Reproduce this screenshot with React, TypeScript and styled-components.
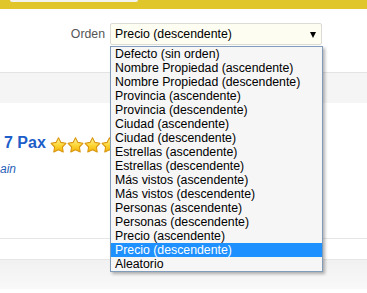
import styled, { createGlobalStyle } from 'styled-components';

const GlobalStyle = createGlobalStyle`
	body {
		margin: 0;
		background: #fff;
		font-family: "Liberation Sans", Arial, sans-serif;
	}
`;

const options = [
	'Defecto (sin orden)',
	'Nombre Propiedad (ascendente)',
	'Nombre Propiedad (descendente)',
	'Provincia (ascendente)',
	'Provincia (descendente)',
	'Ciudad (ascendente)',
	'Ciudad (descendente)',
	'Estrellas (ascendente)',
	'Estrellas (descendente)',
	'Más vistos (ascendente)',
	'Más vistos (descendente)',
	'Personas (ascendente)',
	'Personas (descendente)',
	'Precio (ascendente)',
	'Precio (descendente)',
	'Aleatorio',
];

const SELECTED = 'Precio (descendente)';

const StyledPage = styled.div`
	width: 367px;
	height: 293px;
	overflow: hidden;
	background: #fff;
`;

const StyledTopBar = styled.div`
	height: 9px;
	background: #e1c62b;
	padding-left: 10px;
`;

const StyledSearchTab = styled.div`
	width: 128px;
	height: 2px;
	background: #f3f3ee;
	border-radius: 0 0 5px 5px;
`;

const StyledSortRow = styled.div`
	display: flex;
	justify-content: flex-end;
	align-items: center;
	gap: 5px;
	height: 22px;
	padding: 14px 45px 0 0;
`;

const StyledLabel = styled.span`
	font-size: 12.3px;
	color: #555;
`;

const StyledSelectWrap = styled.div`
	position: relative;
`;

const StyledSelect = styled.div`
	box-sizing: border-box;
	width: 212px;
	height: 22px;
	display: flex;
	align-items: center;
	justify-content: space-between;
	padding: 0 5px 0 4px;
	border: 1px solid #dcdcd4;
	border-radius: 2px;
	background: #fdfdf1;
	font-size: 12.3px;
	color: #000;
`;

const StyledArrow = styled.span`
	width: 0;
	height: 0;
	border-left: 3.5px solid transparent;
	border-right: 3.5px solid transparent;
	border-top: 6px solid #000;
	margin-top: 1px;
`;

const StyledList = styled.ul`
	position: absolute;
	top: 23px;
	left: 0;
	box-sizing: border-box;
	width: 213px;
	margin: 0;
	padding: 0;
	list-style: none;
	border: 1px solid #7f9cba;
	background: #f6f6f6;
	box-shadow: 2px 2px 3px rgba(0, 0, 0, 0.3);
	z-index: 2;
`;

const StyledOption = styled.li<{ $active?: boolean }>`
	height: 14px;
	line-height: 14px;
	padding-left: 4px;
	font-size: 12.3px;
	white-space: nowrap;
	color: ${({ $active }) => ($active ? '#fff' : '#000')};
	background: ${({ $active }) => ($active ? '#1e90ff' : 'transparent')};
`;

const StyledBand = styled.div`
	margin-top: 27px;
	height: 30px;
	border-top: 1px solid #e4e4e4;
	background: #f5f5f5;
`;

const StyledResult = styled.div`
	height: 105px;
	padding: 30px 0 0 4px;
`;

const StyledTitleRow = styled.div`
	display: flex;
	align-items: center;
	gap: 4px;
	height: 20px;
`;

const StyledTitle = styled.span`
	font-size: 16px;
	font-weight: 700;
	color: #1d5ec8;
`;

const StyledStars = styled.div`
	display: flex;
	gap: 0;
	margin-top: 3px;
`;

const StyledLink = styled.div`
	margin: 9px 0 0 -4px;
	font-size: 12px;
	line-height: 14px;
	font-style: italic;
	color: #2a5fb8;
`;

const StyledRow = styled.div`
	height: 20px;
	border-top: 1px solid #e6e6e6;
	border-bottom: 1px solid #e6e6e6;
`;

const StyledFooter = styled.div`
	height: 29px;
	background: linear-gradient(#f1f1f1, #f9f9f9);
`;

const Star = () => (
	<svg width="17" height="16" viewBox="0 0 17 16">
		<defs>
			<linearGradient id="starFill" x1="0" y1="0" x2="0" y2="1">
				<stop offset="0" stopColor="#fff7a8" />
				<stop offset="0.5" stopColor="#fdd83c" />
				<stop offset="1" stopColor="#f3b300" />
			</linearGradient>
		</defs>
		<path
			d="M8.5 0.8 L10.9 5.4 L15.9 6.3 L12.4 10 L13.2 15 L8.5 12.8 L3.8 15 L4.6 10 L1.1 6.3 L6.1 5.4 Z"
			fill="url(#starFill)"
			stroke="#d9960f"
			strokeWidth="1.1"
			strokeLinejoin="round"
		/>
	</svg>
);

const App = () => {
	return (
		<StyledPage>
			<GlobalStyle />
			<StyledTopBar>
				<StyledSearchTab />
			</StyledTopBar>
			<StyledSortRow>
				<StyledLabel>Orden</StyledLabel>
				<StyledSelectWrap>
					<StyledSelect>
						{SELECTED}
						<StyledArrow />
					</StyledSelect>
					<StyledList>
						{options.map((o) => (
							<StyledOption key={o} $active={o === SELECTED}>
								{o}
							</StyledOption>
						))}
					</StyledList>
				</StyledSelectWrap>
			</StyledSortRow>
			<StyledBand />
			<StyledResult>
				<StyledTitleRow>
					<StyledTitle>7 Pax</StyledTitle>
					<StyledStars>
						{[0, 1, 2, 3, 4].map((i) => (
							<Star key={i} />
						))}
					</StyledStars>
				</StyledTitleRow>
				<StyledLink>ain</StyledLink>
			</StyledResult>
			<StyledRow />
			<StyledFooter />
		</StyledPage>
	);
};

export default App;
